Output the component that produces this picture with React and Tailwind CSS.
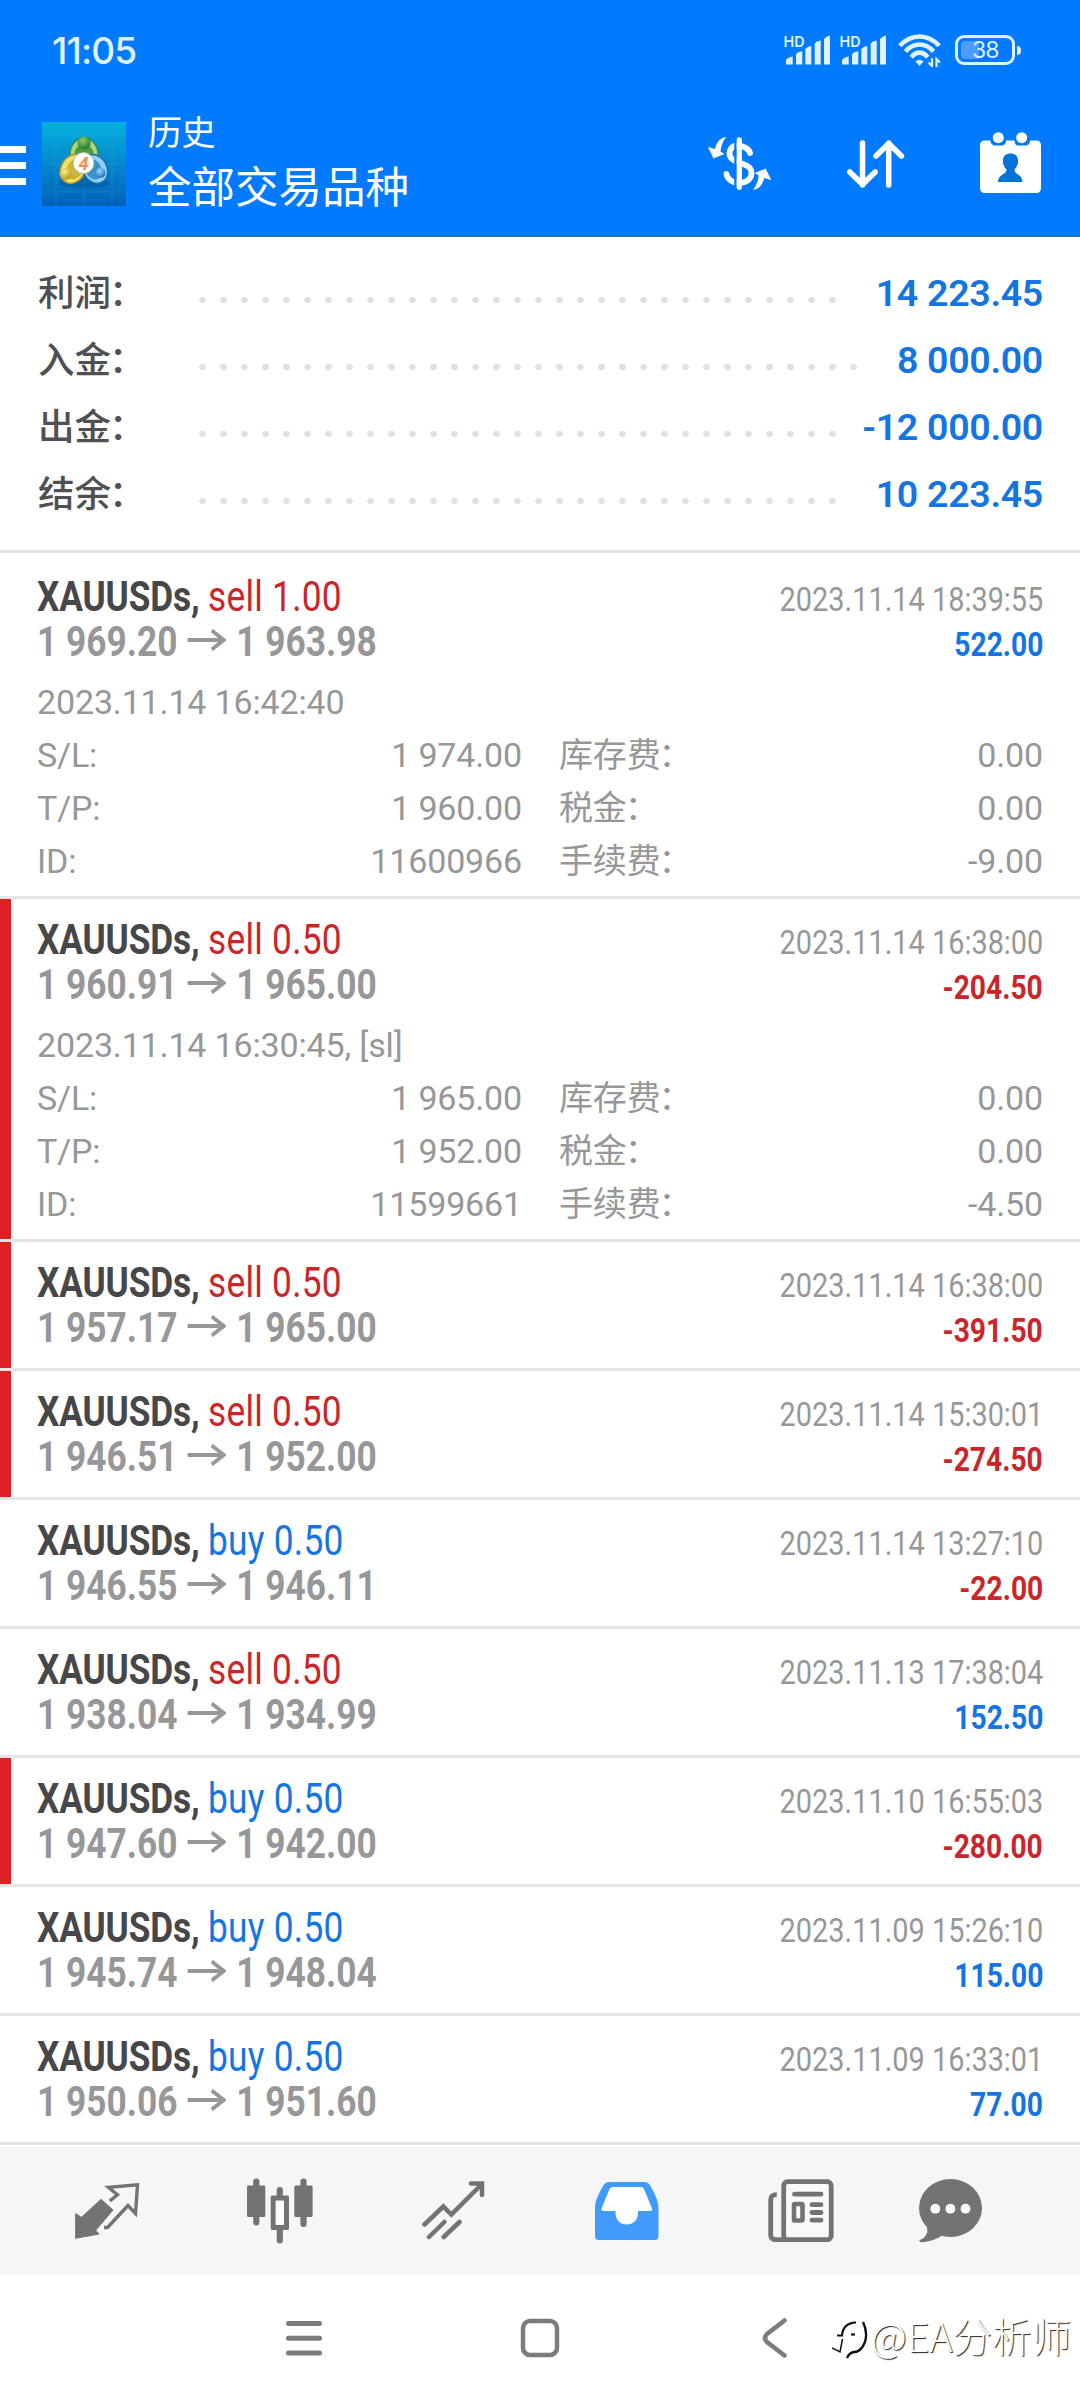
import React from 'react';

const summary = [
  { label: '利润', value: '14 223.45', dots: 31 },
  { label: '入金', value: '8 000.00', dots: 32 },
  { label: '出金', value: '-12 000.00', dots: 31 },
  { label: '结余', value: '10 223.45', dots: 31 }
];

const deals = [
  {
    side: 'sell', volume: '1.00', open: '1 969.20', close: '1 963.98',
    time: '2023.11.14 18:39:55', profit: '522.00',
    details: {
      opened: '2023.11.14 16:42:40',
      rows: [
        ['S/L:', '1 974.00', '库存费', '0.00'],
        ['T/P:', '1 960.00', '税金', '0.00'],
        ['ID:', '11600966', '手续费', '-9.00']
      ]
    }
  },
  {
    side: 'sell', volume: '0.50', open: '1 960.91', close: '1 965.00',
    time: '2023.11.14 16:38:00', profit: '-204.50', stopped: true,
    details: {
      opened: '2023.11.14 16:30:45, [sl]',
      rows: [
        ['S/L:', '1 965.00', '库存费', '0.00'],
        ['T/P:', '1 952.00', '税金', '0.00'],
        ['ID:', '11599661', '手续费', '-4.50']
      ]
    }
  },
  { side: 'sell', volume: '0.50', open: '1 957.17', close: '1 965.00', time: '2023.11.14 16:38:00', profit: '-391.50', stopped: true },
  { side: 'sell', volume: '0.50', open: '1 946.51', close: '1 952.00', time: '2023.11.14 15:30:01', profit: '-274.50', stopped: true },
  { side: 'buy', volume: '0.50', open: '1 946.55', close: '1 946.11', time: '2023.11.14 13:27:10', profit: '-22.00' },
  { side: 'sell', volume: '0.50', open: '1 938.04', close: '1 934.99', time: '2023.11.13 17:38:04', profit: '152.50' },
  { side: 'buy', volume: '0.50', open: '1 947.60', close: '1 942.00', time: '2023.11.10 16:55:03', profit: '-280.00', stopped: true },
  { side: 'buy', volume: '0.50', open: '1 945.74', close: '1 948.04', time: '2023.11.09 15:26:10', profit: '115.00' },
  { side: 'buy', volume: '0.50', open: '1 950.06', close: '1 951.60', time: '2023.11.09 16:33:01', profit: '77.00' }
];

const SignalIcon = () => (
  <svg width="48" height="42" viewBox="0 -6 48 42" fill="#dff1ff">
    <text x="0.500" y="11.500" fontSize="15" fontWeight="600" fontFamily="Inter, sans-serif" textLength="21" lengthAdjust="spacingAndGlyphs">HD</text>
    <path d="M3 29.500v-4.500q2-3 6.700-3.500v8z" />
    <path d="M13 29.500V19q2-2.500 6.300-2.800v13.300z" />
    <path d="M22.300 29.500V14q2-2.500 6-3v18.500z" />
    <path d="M31.700 29.500V8.500q2-2.500 6-3v24z" />
    <path d="M41 29.500V4q2-3 6-3.500v29z" />
  </svg>
);

const WifiIcon = () => (
  <svg width="44" height="33" viewBox="0 0 44 33" fill="none" stroke="#dff1ff" strokeWidth="4.600">
    <path d="M1.800 11.800Q10.500 2.500 21.500 2.500T41.200 11.800" />
    <path d="M7.500 17.500Q13.500 10.500 21.500 10.500T35.500 17.500" />
    <path d="M13.300 23.200Q17 18.600 21.500 18.600T29.700 23.200" />
    <path d="M17.500 27.500q4-3.500 8 0l-4 4.500z" fill="#dff1ff" stroke="none" />
    <path d="M34 24v8l-3.500-3.500M38.500 33v-8l3.500 3.500" strokeWidth="2.200" />
  </svg>
);

const StatusBar = () => (
  <div className="flex items-center h-[100px] pl-[52px] pr-[59px] text-[#dff1ff]">
    <span className="font-[Inter,sans-serif] text-[37px] font-medium leading-none tracking-[-0.9px]">11:05</span>
    <div className="flex items-center ml-auto">
      <SignalIcon />
      <span className="w-[8px]" />
      <SignalIcon />
      <span className="w-[11px]" />
      <WifiIcon />
      <span className="w-[13px]" />
      <div className="relative w-[60px] h-[30px] rounded-[9px] border-[3px] border-[#dff1ff]">
        <div className="absolute left-[3px] top-[3px] w-[18px] h-[18px] rounded-l bg-[#4d9cff]" />
        <span className="absolute left-[14px] top-0 font-[Inter,sans-serif] text-[23px] leading-[24px] tracking-[-1px]">38</span>
      </div>
      <div className="w-[4px] h-[9px] ml-[2px] rounded-r bg-[#dff1ff]" />
    </div>
  </div>
);

const AppLogo = () => (
  <svg width="84" height="84" viewBox="0 0 84 84">
    <defs>
      <linearGradient id="sky" x1="0" y1="0" x2="0" y2="1">
        <stop offset="0" stopColor="#04b2de" />
        <stop offset="0.550" stopColor="#0583cb" />
        <stop offset="1" stopColor="#0361b8" />
      </linearGradient>
      <radialGradient id="green" cx="0.400" cy="0.300" r="0.700">
        <stop offset="0" stopColor="#8fcb68" />
        <stop offset="1" stopColor="#237a35" />
      </radialGradient>
      <radialGradient id="yellow" cx="0.400" cy="0.300" r="0.700">
        <stop offset="0" stopColor="#fbf08a" />
        <stop offset="1" stopColor="#b39a1c" />
      </radialGradient>
      <radialGradient id="blue" cx="0.400" cy="0.300" r="0.700">
        <stop offset="0" stopColor="#9bdcff" />
        <stop offset="1" stopColor="#1b74bd" />
      </radialGradient>
    </defs>
    <rect width="84" height="84" fill="url(#sky)" />
    <path d="M0 14H84M0 42H84M0 70H84M14 0V84M42 0V84M70 0V84" stroke="#3fb4e8" strokeOpacity="0.250" />
    <ellipse cx="42" cy="61" rx="25" ry="5" fill="#034a8c" opacity="0.400" />
    <ellipse cx="42" cy="32" rx="14" ry="16" fill="#a5d585" stroke="#3c8f3c" strokeWidth="1.500" />
    <ellipse cx="42" cy="34" rx="10" ry="12" fill="#4b9c45" />
    <ellipse cx="31" cy="47" rx="12" ry="15" fill="#efe169" stroke="#a8952a" strokeWidth="1.500" transform="rotate(28 31 47)" />
    <ellipse cx="33" cy="47" rx="8" ry="11" fill="#c9b53a" transform="rotate(28 33 47)" />
    <ellipse cx="53" cy="47" rx="12" ry="15" fill="#8fd0f7" stroke="#1f69a8" strokeWidth="1.500" transform="rotate(-28 53 47)" />
    <ellipse cx="51" cy="47" rx="8" ry="11" fill="#3a8fd0" transform="rotate(-28 51 47)" />
    <circle cx="42" cy="21" r="6.500" fill="url(#green)" />
    <circle cx="23.500" cy="52" r="6" fill="url(#yellow)" />
    <circle cx="58.500" cy="51" r="5" fill="url(#blue)" />
    <circle cx="41.500" cy="41" r="10.500" fill="#fff" stroke="#b9b48d" />
    <text x="41.500" y="47.500" fontSize="18" fontWeight="700" fontStyle="italic" fontFamily="Roboto, sans-serif" textAnchor="middle" fill="#ee8f4c">4</text>
  </svg>
);

const CurrencyIcon = () => (
  <svg width="64" height="54" viewBox="0 0 64 54" fill="#fff">
    <path d="M42 16C40 8 21.500 4 21.500 16.500C21.500 28 43.500 24 43.500 36C43.500 49 20 49 18.500 37" fill="none" stroke="#fff" strokeWidth="5.800" strokeLinecap="round" />
    <path d="M27.500 4v46" stroke="#0379ff" strokeWidth="2.500" />
    <path d="M31.300 2.800v47.500" stroke="#fff" strokeWidth="5.200" strokeLinecap="round" />
    <path d="M18 0C12 1 8.500 5 7 12L0 10L5.500 21.500L16.500 17L12.500 14.500C13 9 15 4 18 0Z" />
    <path d="M18 0C12 1 8.500 5 7 12L0 10L5.500 21.500L16.500 17L12.500 14.500C13 9 15 4 18 0Z" transform="rotate(180 31.600 26.500)" />
  </svg>
);

const SortIcon = () => (
  <svg width="58" height="48" viewBox="0 0 58 48" fill="none" stroke="#fff" strokeWidth="5.500" strokeLinecap="round" strokeLinejoin="round">
    <path d="M15.500 3V45M2.800 32L15.500 44.500L28.200 32" />
    <path d="M41.700 45V3M29 16L41.700 3.500L54.400 16" />
  </svg>
);

const CalendarIcon = () => (
  <svg width="61" height="62" viewBox="0 0 61 62" fill="#fff">
    <path d="M5 8.500H10.500C10.500 12 13 13.500 15 13.500H22C24 13.500 26 12 26 8.500H34.500C34.500 12 36 13.500 38 13.500H46C48 13.500 50 12 50 8.500H56Q61 8.500 61 13.500V56Q61 61 56 61H5Q0 61 0 56V13.500Q0 8.500 5 8.500Z" />
    <circle cx="18.300" cy="5.700" r="5.500" />
    <circle cx="41.700" cy="5.700" r="5.500" />
    <path d="M30.400 21.500C35 21.500 38 24 38 28.500C38.500 31 37 35 34.500 37.500C34.500 43 42.500 42 42.500 50H18C18 42 26.500 43 26.500 37.500C24 35 22.500 31 23 28.500C23 24 26 21.500 30.400 21.500Z" fill="#0573d8" />
  </svg>
);

const Header = () => (
  <header className="h-[237px] bg-[#007aff] border-b-2 border-[#1f72b8] text-white">
    <StatusBar />
    <div className="flex items-start pr-[39px]">
      <div className="flex flex-col gap-[9px] mt-[46px] w-[26px]">
        <span className="h-[7px] bg-white" />
        <span className="h-[7px] bg-white" />
        <span className="h-[7px] bg-white" />
      </div>
      <div className="ml-4 mt-[22px]">
        <AppLogo />
      </div>
      <div className="ml-[22px] mt-[11px] font-['Noto_Sans_CJK_SC',sans-serif]">
        <div className="text-[34px] leading-[40px] tracking-[-0.500px]">历史</div>
        <div className="text-[43.500px] leading-[60px] mt-[4px]">全部交易品种</div>
      </div>
      <div className="flex items-start ml-auto mt-[32px]">
        <div className="mt-[5px]"><CurrencyIcon /></div>
        <div className="ml-[75px] mt-[8px]"><SortIcon /></div>
        <div className="ml-[75px]"><CalendarIcon /></div>
      </div>
    </div>
  </header>
);

const Summary = () => (
  <section className="pt-[23px] pb-[22px] pl-[38px] pr-[37px] border-b-3 border-[#e4e4e4]">
    {summary.map((row) => (
      <div key={row.label} className="flex h-[67px] leading-[67px]">
        <span className="w-[154px] h-[67px] leading-[61px] font-['Noto_Sans_CJK_SC',sans-serif] text-[36.500px] font-medium text-[#505053] whitespace-nowrap">
          {row.label}<span className="ml-[-2px]">：</span>
        </span>
        <span
          className="h-[8px] mt-[36px] bg-[radial-gradient(circle,#e0e0e0_3px,transparent_3.500px)] bg-[length:21px_8px]"
          style={{ width: row.dots * 21 }}
        />
        <span className="ml-auto text-[37.500px] font-semibold tracking-[-0.300px] text-[#1475e2] whitespace-nowrap">{row.value}</span>
      </div>
    ))}
  </section>
);

const PriceArrow = () => (
  <svg className="inline-block mx-[12px] align-[5px]" width="46" height="22" viewBox="0 0 46 22" fill="none" stroke="#979799" strokeWidth="4">
    <path d="M0 11H43M29 1.500L43.500 11L29 20.500" />
  </svg>
);

const Deal = ({ deal }) => {
  const sideColor = deal.side === 'sell' ? 'text-[#c9262b]' : 'text-[#1475e2]';
  const profitColor = deal.profit.startsWith('-') ? 'text-[#c9262b]' : 'text-[#1475e2]';

  return (
    <div className="flex border-b-3 border-[#e4e4e4]">
      <div className={deal.stopped ? 'w-[11px] bg-[#e02020]' : 'w-[11px]'} />
      <div className={deal.details ? 'flex-1 pt-[18px] pb-[8px] pl-[26px] pr-[37px]' : 'flex-1 py-[18px] pl-[26px] pr-[37px]'}>
        <div className="flex justify-between h-[45px] leading-[45px] whitespace-nowrap">
          <div className="text-[42px] origin-left scale-x-[0.840]">
            <span className="font-bold tracking-[-0.200px] text-[#47474a]">XAUUSDs, </span>
            <span className={`tracking-[0.300px] ${sideColor}`}>{deal.side} {deal.volume}</span>
          </div>
          <div className="text-[34px] leading-[50px] origin-right scale-x-[0.850] text-[#979799]">{deal.time}</div>
        </div>
        <div className="flex justify-between h-[45px] leading-[45px] whitespace-nowrap">
          <div className="text-[42px] font-bold origin-left scale-x-[0.840] text-[#979799]">
            {deal.open}
            <PriceArrow />
            {deal.close}
          </div>
          <div className={`text-[34px] leading-[50px] font-bold origin-right scale-x-[0.830] ${profitColor}`}>{deal.profit}</div>
        </div>
        {deal.details && (
          <div className="mt-[12px] text-[34px] leading-[53px] tracking-[-0.150px] text-[#979799]">
            <div className="h-[53px]">{deal.details.opened}</div>
            {deal.details.rows.map(([name, value, feeName, fee]) => (
              <div key={name} className="flex h-[53px]">
                <span>{name}</span>
                <span className="ml-auto">{value}</span>
                <span className="w-[240px] ml-[37px] leading-[48px] font-['Noto_Sans_CJK_SC',sans-serif]">
                  {feeName}<span className="ml-[-2px]">：</span>
                </span>
                <span className="w-[244px] text-right">{fee}</span>
              </div>
            ))}
          </div>
        )}
      </div>
    </div>
  );
};

const QuotesIcon = () => (
  <svg width="65" height="56" viewBox="0 0 65 56">
    <path d="M0.700 30.700L6.500 34.300L26 16.300L38 27L20.700 47.300L24 51L0.700 55.300Z" fill="#737373" stroke="#737373" strokeLinejoin="round" />
    <path d="M34.800 18L42.400 11.700L33.400 4.300L62.500 1.800L60.500 30.500L53 22.500L32.500 44.500H29" fill="none" stroke="#737373" strokeWidth="3.400" />
  </svg>
);

const ChartIcon = () => (
  <svg width="66" height="66" viewBox="0 0 66 66" fill="#737373">
    <rect x="6.200" y="0.500" width="6.200" height="47" rx="3" />
    <rect x="0" y="7.500" width="18.300" height="31.500" rx="1.500" />
    <rect x="53.400" y="0.500" width="6.200" height="48.500" rx="3" />
    <rect x="47.300" y="7.500" width="18.300" height="31.500" rx="1.500" />
    <rect x="29.700" y="9" width="6.200" height="56.500" rx="3" />
    <rect x="23.700" y="17.500" width="18.300" height="34.500" rx="1.500" />
    <rect x="28.600" y="22.500" width="8.400" height="24.500" rx="1" fill="#fff" />
  </svg>
);

const TradeIcon = () => (
  <svg width="63" height="59" viewBox="0 0 63 59" fill="none" stroke="#737373" strokeWidth="4.500" strokeLinecap="round">
    <path d="M2.500 43.500L21.300 25.500L29.300 33.500L59 4" />
    <path d="M49 2.500H60V14" />
    <path d="M7 56L22.400 41M21.700 56L37.500 41" />
  </svg>
);

const HistoryIcon = () => (
  <svg width="64" height="58" viewBox="0 0 64 58">
    <path d="M14.500 0H50Q53 0 54.500 2.500C58.500 9 63.500 18 63.500 26V54Q63.500 58 59.500 58H4Q0 58 0 54V26C0 18 5 9 9 2.500Q10.500 0 14.500 0Z" fill="#409bfc" />
    <path d="M18 5H46Q48 5 49 7L57 26.500Q57.500 29 55 29H43V31C43 38 38 42.500 31.700 42.500S20.500 38 20.500 31V29H8.500Q6 29 6.500 26.500L14.500 7Q15.500 5 18 5Z" fill="#fff" />
  </svg>
);

const NewsIcon = () => (
  <svg width="66" height="64" viewBox="0 0 66 64" fill="none" stroke="#737373" strokeWidth="4.800">
    <rect x="15.700" y="2.700" width="47.500" height="58" rx="4" fill="#fff" fillOpacity="0.400" />
    <path d="M8.800 15.700Q2.700 15.500 2.700 20.500V56Q2.700 60.700 8 60.700H17" />
    <path d="M26.500 15.200H53M44 25.700H53M44 33.500H53M44 41.200H53" strokeLinecap="round" />
    <rect x="26" y="25" width="8.500" height="16.500" rx="1" strokeWidth="4.600" />
  </svg>
);

const ChatIcon = () => (
  <svg width="63" height="64" viewBox="0 0 63 64">
    <ellipse cx="31.500" cy="29" rx="31.500" ry="29" fill="#737373" />
    <path d="M5 42Q10 50 7.500 55Q5 60 0.500 61Q-0.500 63.500 4 63.200Q15 62 24 56L30 50Z" fill="#737373" />
    <circle cx="16.300" cy="29.700" r="4.900" fill="#fff" />
    <circle cx="31.400" cy="29.700" r="4.900" fill="#fff" />
    <circle cx="46.500" cy="29.700" r="4.900" fill="#fff" />
  </svg>
);

const TabBar = () => (
  <nav className="flex items-center h-[128px] mt-[2px] pl-[20px] pb-[1px] bg-[#f6f6f6]">
    <div className="flex justify-center w-[174px]"><QuotesIcon /></div>
    <div className="flex justify-center w-[172px]"><ChartIcon /></div>
    <div className="flex justify-center w-[174px]"><TradeIcon /></div>
    <div className="flex justify-center w-[174px]"><HistoryIcon /></div>
    <div className="flex justify-center w-[174px]"><NewsIcon /></div>
    <div className="flex justify-center w-[125px]"><ChatIcon /></div>
  </nav>
);

const SystemNav = () => (
  <div className="relative flex items-center justify-center h-[125px]">
    <div className="flex justify-center w-[236px]">
      <svg width="40" height="40" viewBox="0 0 40 40" stroke="#7b7b7b" strokeWidth="5" strokeLinecap="round">
        <path d="M4.500 5.500H35.500M4.500 20.200H35.500M4.500 34.900H35.500" />
      </svg>
    </div>
    <div className="flex justify-center w-[236px]">
      <svg width="40" height="40" viewBox="0 0 40 40" fill="none" stroke="#7b7b7b" strokeWidth="4.500">
        <rect x="3" y="3" width="34" height="34" rx="7" />
      </svg>
    </div>
    <div className="flex justify-center w-[236px]">
      <svg width="40" height="40" viewBox="0 0 40 40" fill="none" stroke="#7b7b7b" strokeWidth="4.500" strokeLinecap="round">
        <path d="M28.500 2.500L11 16Q7 20 11 24L28.500 37.500" />
      </svg>
    </div>
    {/* author signature over the navigation bar */}
    <div className="absolute right-[9px] bottom-[37px] flex items-center">
      <svg className="mt-[10px]" width="36" height="40" viewBox="0 0 36 40" fill="none" stroke="#111">
        <path d="M5 15.500H10Q11 3 24 2.500" strokeWidth="2.200" />
        <path d="M31 2Q36 12 33 22Q29 32 22 32Q17 33 15 38" strokeWidth="2.400" />
        <path d="M19 14.500H23" strokeWidth="2.200" />
        <path d="M0 28L8 32L10.500 19" strokeWidth="1.500" />
      </svg>
      <span className="ml-[3px] font-['Noto_Sans_CJK_SC',sans-serif] text-[39.500px] leading-[56px] font-light text-white whitespace-nowrap [text-shadow:1px_1px_1px_#222]">
        @EA分析师
      </span>
    </div>
  </div>
);

const App = () => {
  return (
    <div className="w-[1080px] h-[2400px] overflow-hidden bg-white font-[Roboto,sans-serif]">
      <Header />
      <Summary />
      <div className="pt-[3px]">
        {deals.map((deal) => (
          <Deal key={deal.time + deal.open} deal={deal} />
        ))}
      </div>
      <TabBar />
      <SystemNav />
    </div>
  );
};

export default App;
